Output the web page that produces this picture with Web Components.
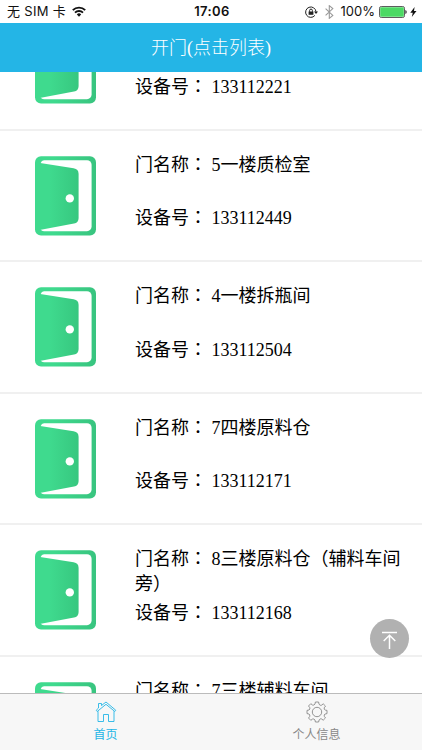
<!DOCTYPE html>
<html lang="zh-CN">
<head>
<meta charset="utf-8">
<title>开门</title>
<style>
  body {
    margin: 0;
    background: #fff;
    font-family: "Liberation Serif", "Noto Sans CJK SC", serif;
  }
</style>
</head>
<body>
<door-app></door-app>

<script>
class StatusBar extends HTMLElement {
  constructor() {
    super();
    this.attachShadow({ mode: 'open' }).innerHTML = `
      <style>
        :host {
          display: grid;
          grid-template-columns: 1fr auto 1fr;
          align-items: center;
          height: 23px;
          padding: 0 5px 0 7px;
          background: #fff;
          color: #111;
          font: 13px/23px Inter, "Noto Sans CJK SC", sans-serif;
        }
        .side { display: flex; align-items: center; height: 23px; }
        .right { justify-content: flex-end; }
        .carrier { font-size: 13px; letter-spacing: 0.3px; }
        .time { font-weight: 600; font-size: 13px; letter-spacing: 0.4px; }
        .wifi { margin-left: 6px; }
        .bt { margin: 0 7px 0 7px; }
        .battery { margin: 0 3px 0 4px; }
        svg { display: block; flex: none; }
      </style>
      <div class="side">
        <span class="carrier">无 SIM 卡</span>
        <svg class="wifi" width="14" height="11" viewBox="0 0 14 11" fill="none" stroke="#111" stroke-width="1.9">
          <path d="M0.8 4.2a8.8 8.8 0 0 1 12.4 0M3 6.6a5.7 5.7 0 0 1 8 0"/>
          <path d="M7 10.7L4.8 8.4a3.2 3.2 0 0 1 4.4 0z" fill="#111" stroke="none"/>
        </svg>
      </div>
      <span class="time">17:06</span>
      <div class="side right">
        <svg width="13" height="12" viewBox="0 0 13 12" fill="none" stroke="#222" stroke-width="1">
          <path d="M9.9 9.4A5.2 5.2 0 1 1 11 5.800"/>
          <path d="M9 5.500h4l-2 2.600z" fill="#222" stroke="none"/>
          <path d="M3.600 5.500h4.800v3.300H3.600z" fill="#222" stroke="none"/>
          <path d="M4.600 5.800V4.500a1.400 1.400 0 0 1 2.800 0v1.300"/>
        </svg>
        <svg class="bt" width="9" height="14" viewBox="0 0 9 14" fill="none" stroke="#999" stroke-width="1.1">
          <path d="M0.6 3.6l7.2 6.8-3.5 2.9V0.7l3.5 2.9-7.2 6.8"/>
        </svg>
        <span>100%</span>
        <svg class="battery" width="28" height="12" viewBox="0 0 28 12">
          <rect x="0.5" y="0.5" width="25" height="11" rx="1.8" fill="#fff" stroke="#333" stroke-width="0.8"/>
          <rect x="1.2" y="1.2" width="23.6" height="9.6" rx="0.8" fill="#4cd964"/>
          <path d="M26.4 4v4q1.3-.6 1.3-2t-1.3-2z" fill="#222"/>
        </svg>
        <svg width="7" height="10" viewBox="0 0 7 10"><path d="M4.6 0L0.3 5.7h2.5L1.8 10l4.7-5.9H4z" fill="#111"/></svg>
      </div>
    `;
  }
}
customElements.define('status-bar', StatusBar);

class NavHeader extends HTMLElement {
  constructor() {
    super();
    this.attachShadow({ mode: 'open' }).innerHTML = `
      <style>
        :host {
          display: flex;
          align-items: center;
          justify-content: center;
          height: 49px;
          background: #24b5e6;
          color: #fff;
          font-size: 18px;
          font-weight: 300;
          line-height: 24px;
        }
      </style>
      <slot></slot>
    `;
  }
}
customElements.define('nav-header', NavHeader);

class DoorIcon extends HTMLElement {
  constructor() {
    super();
    this.attachShadow({ mode: 'open' }).innerHTML = `
      <style>
        :host { display: block; width: 61px; height: 80px; }
        svg { display: block; }
      </style>
      <svg width="61" height="80" viewBox="0 0 61 80">
        <defs>
          <linearGradient id="frame"><stop offset="0.3" stop-color="#3fda8e"/><stop offset="1" stop-color="#38c47f"/></linearGradient>
          <linearGradient id="leaf"><stop offset="0.3" stop-color="#3fda8e"/><stop offset="1" stop-color="#37c77f"/></linearGradient>
        </defs>
        <rect y="0.3" width="61" height="79.2" rx="6" fill="url(#frame)"/>
        <path d="M9 4.2h43a4.6 4.6 0 0 1 4.6 4.6v61.8a4.6 4.6 0 0 1-4.6 4.6H9q-2.5 0-3.3-1.7L5.7 7q.8-2.8 3.3-2.8z" fill="#fff"/>
        <path d="M2 6.6l36.6 5.7q5 .8 5 5.6v44q0 4.6-4.6 5.6L2 74.5z" fill="url(#leaf)"/>
        <circle cx="34.8" cy="42.4" r="4.2" fill="#fff"/>
      </svg>
    `;
  }
}
customElements.define('door-icon', DoorIcon);

class DoorItem extends HTMLElement {
  constructor() {
    super();
    this.attachShadow({ mode: 'open' });
  }

  line(label, value) {
    if (!value) return '';
    return `${label}<span class="colon" lang="zh-TW">：</span> ${value}`;
  }

  connectedCallback() {
    this.shadowRoot.innerHTML = `
      <style>
        :host {
          display: flex;
          flex: none;
          box-sizing: border-box;
          height: 131.5px;
          padding: 0 10px 0 35px;
          border-bottom: 2px solid #f0f0f0;
          color: #000;
          font-size: 18px;
          line-height: 25px;
        }
        door-icon { flex: none; margin: 25px 39px 0 0; }
        .info { flex: 1; padding-top: 22px; }
        .name { min-height: 53.5px; }
        .colon { font-family: "Noto Sans CJK TC", sans-serif; line-height: 1; }
      </style>
      <door-icon></door-icon>
      <div class="info">
        <div class="name">${this.line('门名称', this.getAttribute('name'))}</div>
        <div>${this.line('设备号', this.getAttribute('device'))}</div>
      </div>
    `;
  }
}
customElements.define('door-item', DoorItem);

class BackTop extends HTMLElement {
  constructor() {
    super();
    this.attachShadow({ mode: 'open' }).innerHTML = `
      <style>
        :host {
          display: block;
          width: 39px;
          height: 39px;
          border-radius: 50%;
          background: #b1b1b1;
        }
        svg { display: block; }
      </style>
      <svg width="39" height="39" viewBox="0 0 39 39" fill="none" stroke="#fff" stroke-width="1.5">
        <path d="M12 13.5h15M19.5 30V16.5M13.7 22l5.8-5.7 5.8 5.7"/>
      </svg>
    `;
  }
}
customElements.define('back-top', BackTop);

class TabItem extends HTMLElement {
  constructor() {
    super();
    this.attachShadow({ mode: 'open' }).innerHTML = `
      <style>
        :host {
          display: flex;
          flex: 1;
          flex-direction: column;
          align-items: center;
          padding-top: 7px;
          color: #888;
          font: 12px/16px "Noto Sans CJK SC", sans-serif;
        }
        :host([active]) { color: #24b5e6; }
        ::slotted(svg) { display: block; margin-bottom: 3px; }
      </style>
      <slot name="icon"></slot>
      <span><slot></slot></span>
    `;
  }
}
customElements.define('tab-item', TabItem);

class TabBar extends HTMLElement {
  constructor() {
    super();
    this.attachShadow({ mode: 'open' }).innerHTML = `
      <style>
        :host {
          display: flex;
          box-sizing: border-box;
          height: 57px;
          border-top: 1px solid #bbb;
          background: #f7f7f7;
        }
      </style>
      <slot></slot>
    `;
  }
}
customElements.define('tab-bar', TabBar);

class DoorApp extends HTMLElement {
  constructor() {
    super();
    this.attachShadow({ mode: 'open' }).innerHTML = `
      <style>
        :host {
          display: flex;
          flex-direction: column;
          position: relative;
          width: 422px;
          height: 750px;
          overflow: hidden;
        }
        status-bar, nav-header, tab-bar { flex: none; }
        .list { flex: 1; min-height: 0; overflow: hidden; }
        /* list is scrolled part of the way down */
        .rows { display: flex; flex-direction: column; margin-top: -73px; }
        back-top { position: absolute; right: 13px; bottom: 92px; }
      </style>
      <status-bar></status-bar>
      <nav-header>开门(点击列表)</nav-header>
      <div class="list">
        <div class="rows">
          <door-item device="133112221"></door-item>
          <door-item name="5一楼质检室" device="133112449"></door-item>
          <door-item name="4一楼拆瓶间" device="133112504"></door-item>
          <door-item name="7四楼原料仓" device="133112171"></door-item>
          <door-item name="8三楼原料仓（辅料车间旁）" device="133112168"></door-item>
          <door-item name="7三楼辅料车间"></door-item>
        </div>
      </div>
      <back-top></back-top>
      <tab-bar>
        <tab-item active>
          <svg slot="icon" width="22" height="22" viewBox="0 0 22 22" fill="none" stroke="#24b5e6" stroke-width="0.9">
            <path d="M3.5 7V2.5h3v2L11 1l9.8 8.3-1 1.2L11 3.3 2.2 10.5l-1-1.2z"/>
            <path d="M3 10.2v10.3h5.5v-7h5v7H19V10.2"/>
          </svg>
          首页
        </tab-item>
        <tab-item>
          <svg slot="icon" width="22" height="22" viewBox="0 0 22 22" fill="none" stroke="#888" stroke-width="0.9">
            <path stroke-linejoin="round" d="M9.4 1h3.2q.1 2.9 1.6 3.300t3-1.500l2.300 2.300q-1.800 1.800-1.300 3t2.800 1.300v3.200q-2.400.1-2.800 1.400t1.300 2.900l-2.300 2.300q-1.700-1.800-3-1.300T12.600 21H9.400q-.1-2.500-1.500-3t-3.100 1.300L2.500 17q1.800-1.600 1.300-3T1 12.600V9.400q2.500-.1 2.900-1.400T2.500 5l2.300-2.300q1.700 1.900 3.100 1.400T9.400 1z"/>
            <circle cx="11" cy="11" r="4.7"/>
          </svg>
          个人信息
        </tab-item>
      </tab-bar>
    `;
  }
}
customElements.define('door-app', DoorApp);
</script>
</body>
</html>
